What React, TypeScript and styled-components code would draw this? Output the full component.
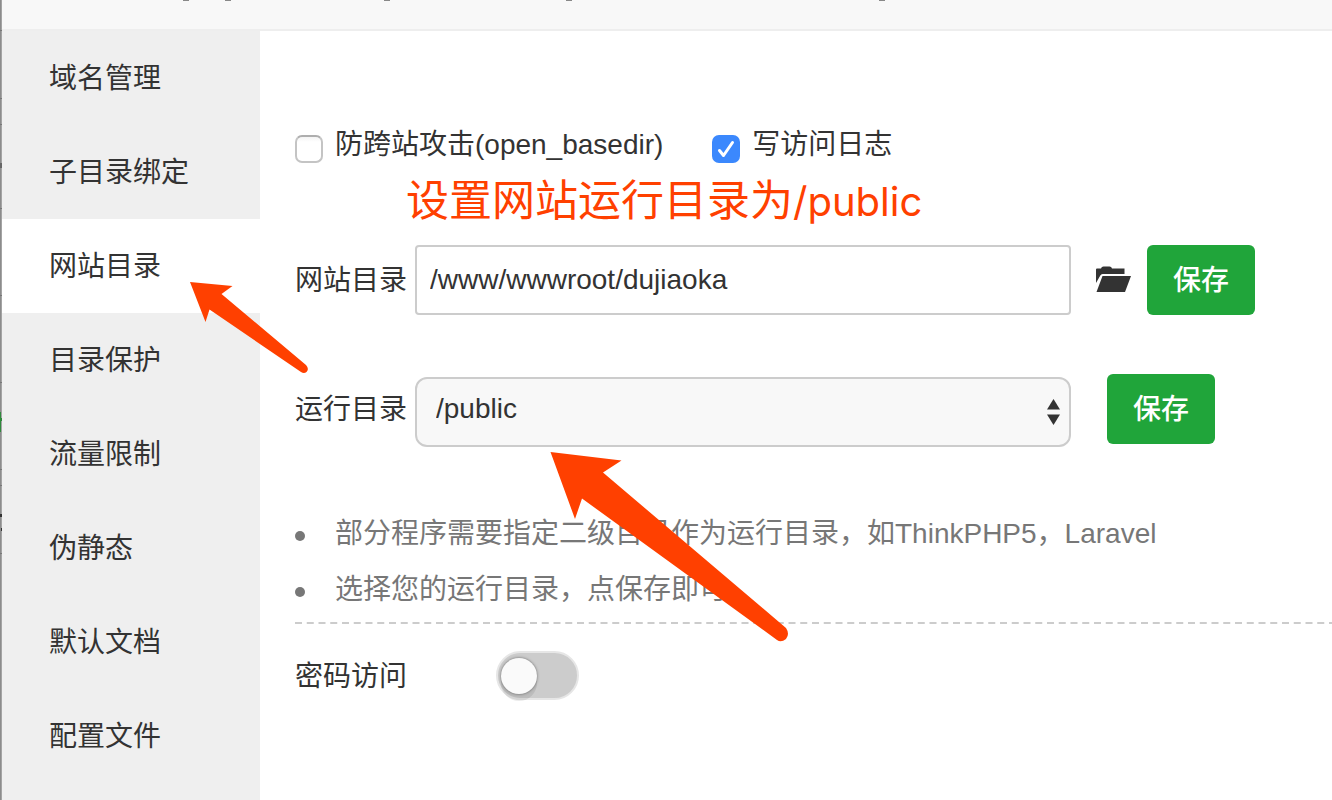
import React, { useState } from "react";
import styled, { createGlobalStyle } from "styled-components";

const GlobalStyle = createGlobalStyle`
  *, *::before, *::after { box-sizing: border-box; }
  body {
    margin: 0;
    background: #fff;
    color: #333;
    font-family: "Liberation Sans", "Noto Sans CJK SC", sans-serif;
    font-size: 28px;
    line-height: 40px;
  }
  button, input, select { font: inherit; color: inherit; margin: 0; }
`;

const Page = styled.div`
  position: relative;
  display: flex;
  min-height: 100vh;
  overflow: hidden;
`;

const Backdrop = styled.div`
  flex: none;
  width: 2px;
  background: linear-gradient(to right, #8c8c8c 1px, #a4a4a4 1px);
`;

const EdgeMarks = styled.svg`
  display: block;
  width: 2px;
  height: 800px;
`;

const Dialog = styled.div`
  flex: 1;
  min-width: 0;
  display: flex;
  flex-direction: column;
`;

const TitleBar = styled.header`
  height: 31px;
  background: #f8f8f8;
  border-bottom: 2px solid #eee;
`;

const TitleMarks = styled.svg`
  display: block;
`;

const Body = styled.div`
  flex: 1;
  display: flex;
`;

const Sidebar = styled.nav`
  flex: none;
  width: 258px;
  display: flex;
  flex-direction: column;
  background: #efefef;
`;

const SidebarItem = styled.a<{ $active?: boolean }>`
  height: 94px;
  padding: 28px 0 26px 47px;
  color: #333;
  text-decoration: none;
  background: ${(p) => (p.$active ? "#fff" : "transparent")};
`;

const Content = styled.main`
  flex: 1;
  min-width: 0;
  padding: 94px 0 0 35px;
`;

const CheckRow = styled.div`
  display: flex;
  gap: 49px;
  height: 40px;
`;

const CheckLabel = styled.label`
  display: flex;
  gap: 12px;
  white-space: nowrap;
`;

const BoxWrap = styled.span`
  display: grid;
  width: 28px;
  height: 28px;
  margin-top: 10px;
  > * { grid-area: 1 / 1; }
`;

const CheckBox = styled.input`
  appearance: none;
  width: 28px;
  height: 28px;
  border: 2px solid #c4c4c4;
  border-top-color: #aeaeae;
  border-radius: 7px;
  background: linear-gradient(#f4f4f4, #fff 5px);
  &:checked {
    border: 0;
    background: #3b88fd;
  }
`;

const Tick = styled.svg`
  width: 28px;
  height: 28px;
  pointer-events: none;
`;

const Note = styled.p`
  height: 60px;
  margin: 2px 0 18px 111px;
  color: #ff4000;
  font-family: "Noto Sans CJK SC", sans-serif;
  font-size: 43px;
  line-height: 60px;
  white-space: nowrap;
`;

const NotePath = styled.span`
  font-family: Inter, sans-serif;
  font-size: 40px;
`;

const FieldRow = styled.div`
  display: flex;
  align-items: center;
  height: 70px;
`;

const FieldLabel = styled.label`
  flex: none;
  width: 120px;
  padding-top: 2px;
`;

const TextBox = styled.input`
  flex: none;
  width: 656px;
  height: 70px;
  padding: 0 13px;
  border: 2px solid #ccc;
  border-radius: 4px;
  background: #fff;
`;

const IconButton = styled.button`
  flex: none;
  width: 36px;
  height: 28px;
  margin: 0 16px 0 24px;
  padding: 0;
  border: 0;
  background: none;
  svg { display: block; }
`;

const SaveButton = styled.button`
  flex: none;
  width: 108px;
  height: 70px;
  padding: 2px 0 0;
  border: 0;
  border-radius: 6px;
  background: #20a53a;
  color: #fff;
  font-weight: 500;
`;

const DirRow = styled(FieldRow)`
  margin-top: 59px;
  gap: 36px;
`;

const SelectGroup = styled.div`
  display: flex;
  align-items: center;
`;

const SelectWrap = styled.div`
  display: grid;
  margin-top: 5px;
  width: 656px;
  > * { grid-area: 1 / 1; }
`;

const Select = styled.select`
  appearance: none;
  width: 656px;
  height: 70px;
  padding: 0 19px 5px;
  border: 2px solid #ccc;
  border-radius: 12px;
  background: #f8f8f8;
`;

const SelectArrows = styled.svg`
  justify-self: end;
  align-self: center;
  margin-right: 11px;
  pointer-events: none;
`;

const Tips = styled.ul`
  margin: 62px 0 0;
  padding: 0;
  list-style: none;
  color: #777;
  line-height: 56px;
`;

const Tip = styled.li`
  display: flex;
  align-items: center;
  gap: 30px;
  white-space: nowrap;
  &::before {
    content: "";
    width: 10px;
    height: 10px;
    margin-top: 4px;
    border-radius: 50%;
    background: #777;
  }
`;

const Divider = styled.svg`
  display: block;
  width: 100%;
  height: 2px;
  margin-top: 4px;
`;

const SwitchRow = styled.div`
  display: flex;
  align-items: center;
  gap: 89px;
  margin-top: 27px;
  label { padding-top: 3px; }
`;

const Switch = styled.input`
  appearance: none;
  display: flex;
  align-items: center;
  width: 83px;
  height: 49px;
  padding: 0 3px;
  border: 2px solid #e6e6e6;
  border-radius: 25px;
  background: #ccc;
  &::before {
    content: "";
    width: 36px;
    height: 36px;
    border-radius: 50%;
    background: #fafafa;
    box-shadow: 0 0 3px rgba(0, 0, 0, 0.5), 0 7px 0 rgba(0, 0, 0, 0.08);
  }
  &:checked { background: #20a53a; }
  &:checked::before { margin-left: auto; }
`;

const Annotations = styled.svg`
  position: absolute;
  left: 0;
  top: 0;
  pointer-events: none;
`;

const MENU = ["域名管理", "子目录绑定", "网站目录", "目录保护", "流量限制", "伪静态", "默认文档", "配置文件"];

export default function App() {
  const [current, setCurrent] = useState("网站目录");
  const [basedir, setBasedir] = useState(false);
  const [log, setLog] = useState(true);
  return (
    <>
      <GlobalStyle />
      <Page>
        <Backdrop>
          <EdgeMarks viewBox="0 0 2 800" aria-hidden="true">
            {[30, 98, 124, 208, 295, 382, 469, 485, 553].map((y) => (
              <rect key={y} x="0" y={y} width="2" height="1" fill="#777" />
            ))}
            <rect x="0" y="163" width="2" height="5" fill="#666" />
            <rect x="0" y="412" width="1" height="20" fill="#2f8a3c" />
            <rect x="0" y="418" width="2" height="3" fill="#2f8a3c" />
            <rect x="0" y="514" width="2" height="3" fill="#333" />
            <rect x="1" y="528" width="1" height="3" fill="#333" />
          </EdgeMarks>
        </Backdrop>
        <Dialog>
          <TitleBar>
            <TitleMarks width="900" height="2" aria-hidden="true">
              {[181, 223, 382, 564, 877].map((x) => (
                <rect key={x} x={x} y="0" width="6" height="1" fill="#888" />
              ))}
            </TitleMarks>
          </TitleBar>
          <Body>
            <Sidebar>
              {MENU.map((name) => (
                <SidebarItem key={name} href="#" $active={name === current} onClick={() => setCurrent(name)}>
                  {name}
                </SidebarItem>
              ))}
            </Sidebar>
            <Content>
              <CheckRow>
                <CheckLabel>
                  <BoxWrap>
                    <CheckBox type="checkbox" checked={basedir} onChange={(e) => setBasedir(e.target.checked)} />
                  </BoxWrap>
                  防跨站攻击(open_basedir)
                </CheckLabel>
                <CheckLabel>
                  <BoxWrap>
                    <CheckBox type="checkbox" checked={log} onChange={(e) => setLog(e.target.checked)} />
                    {log && (
                      <Tick viewBox="0 0 28 28" aria-hidden="true">
                        <path d="M7.5 15.5 11.5 20.5 20.5 7.5" fill="none" stroke="#fff" strokeWidth="3" strokeLinecap="round" strokeLinejoin="round" />
                      </Tick>
                    )}
                  </BoxWrap>
                  写访问日志
                </CheckLabel>
              </CheckRow>
              <Note>
                设置网站运行目录为<NotePath>/public</NotePath>
              </Note>
              <FieldRow>
                <FieldLabel htmlFor="site-dir">网站目录</FieldLabel>
                <TextBox id="site-dir" type="text" defaultValue="/www/wwwroot/dujiaoka" />
                <IconButton type="button" aria-label="选择目录">
                  <svg width="36" height="28" viewBox="0 0 36 28" fill="#333">
                    <path d="M1 17V3.5Q1 2.5 2 2.500H6Q6.500 0.500 8.500 0.500H14.500Q16.500 0.500 17 2.500H29.500V8H7.500Q6 8 5.300 9.500Z" />
                    <path d="M7.500 10H36L30 26H1.500Z" />
                  </svg>
                </IconButton>
                <SaveButton type="button">保存</SaveButton>
              </FieldRow>
              <DirRow>
                <SelectGroup>
                  <FieldLabel htmlFor="run-dir">运行目录</FieldLabel>
                  <SelectWrap>
                    <Select id="run-dir" defaultValue="/public">
                      <option>/public</option>
                    </Select>
                    <SelectArrows width="13" height="26" viewBox="0 0 13 26" fill="#333" aria-hidden="true">
                      <path d="M6.500 0 13 10.500H0Z" />
                      <path d="M0 15.500H13L6.500 26Z" />
                    </SelectArrows>
                  </SelectWrap>
                </SelectGroup>
                <SaveButton type="button">保存</SaveButton>
              </DirRow>
              <Tips>
                <Tip>部分程序需要指定二级目录作为运行目录，如ThinkPHP5，Laravel</Tip>
                <Tip>选择您的运行目录，点保存即可</Tip>
              </Tips>
              <Divider aria-hidden="true">
                <line x1="0" y1="1" x2="100%" y2="1" stroke="#ccc" strokeWidth="2" strokeDasharray="7 4.75" />
              </Divider>
              <SwitchRow>
                <label htmlFor="password">密码访问</label>
                <Switch id="password" type="checkbox" role="switch" />
              </SwitchRow>
            </Content>
          </Body>
        </Dialog>
        <Annotations width="800" height="660" viewBox="0 0 800 660" fill="#ff4000" aria-hidden="true">
          <path d="M190 282 232.500 286 221.500 294 306 365Q309.500 369 306.500 372Q304 374 301 372L209.500 309.500 205.500 322Z" />
          <path d="M550.500 452 621.500 460.500 603 472.500 786 628Q790 634 786 639Q781 643 777 640L582 498.500 575 519Z" />
        </Annotations>
      </Page>
    </>
  );
}
